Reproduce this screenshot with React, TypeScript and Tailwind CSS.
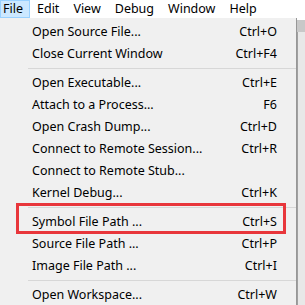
import React from "react";

type Item = { label: string; shortcut?: string } | "sep";

const items: Item[] = [
  { label: "Open Source File...", shortcut: "Ctrl+O" },
  { label: "Close Current Window", shortcut: "Ctrl+F4" },
  "sep",
  { label: "Open Executable...", shortcut: "Ctrl+E" },
  { label: "Attach to a Process...", shortcut: "F6" },
  { label: "Open Crash Dump...", shortcut: "Ctrl+D" },
  { label: "Connect to Remote Session...", shortcut: "Ctrl+R" },
  { label: "Connect to Remote Stub..." },
  { label: "Kernel Debug...", shortcut: "Ctrl+K" },
  "sep",
  { label: "Symbol File Path ...", shortcut: "Ctrl+S" },
  { label: "Source File Path ...", shortcut: "Ctrl+P" },
  { label: "Image File Path ...", shortcut: "Ctrl+I" },
  "sep",
  { label: "Open Workspace...", shortcut: "Ctrl+W" },
];

const menus = ["Edit", "View", "Debug", "Window", "Help"];

export default function App() {
  return (
    <div
      className="relative w-[305px] h-[305px] overflow-hidden bg-white text-black"
      style={{ fontFamily: '"Noto Sans", "Open Sans", sans-serif' }}
    >
      <div className="flex h-[18px] items-center text-[12.5px] leading-none">
        <div className="h-[18px] w-[30px] flex items-center pl-[2px] bg-[#cce8ff] border border-[#99d1ff]">
          File
        </div>
        <div className="flex gap-[14px] pl-[7px]">
          {menus.map((m) => (
            <div key={m} className="h-[18px] flex items-center">
              {m}
            </div>
          ))}
        </div>
      </div>
      <div className="flex">
        <div className="w-[297px] bg-[#f0f0f0] border-r border-[#979797] pt-[3px] text-[12.5px]">
          {items.map((it, i) =>
            it === "sep" ? (
              <div key={i} className="h-[7px] flex items-center pl-[28px]">
                <div className="h-px w-full bg-[#d7d7d7]" />
              </div>
            ) : (
              <div key={i} className="h-[22px] flex items-center pl-[32px] pr-[19px]">
                <span className="flex-1 whitespace-nowrap">{it.label}</span>
                <span className="whitespace-nowrap">{it.shortcut}</span>
              </div>
            )
          )}
        </div>
        <div className="flex-1 flex flex-col">
          <div className="h-[2px] bg-white" />
          <div className="h-[12px] bg-[#c8c8c8]" />
          <div className="flex-1 bg-[#e8e8e8] border-l border-[#a0a0a0]" />
        </div>
      </div>
      <div className="absolute left-[16px] top-[203px] w-[270px] h-[31px] border-[3px] border-[#e8363b]" />
    </div>
  );
}
